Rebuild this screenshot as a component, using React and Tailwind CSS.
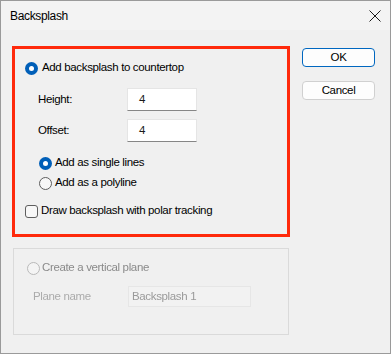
const Radio = ({ checked, disabled }) => (
  checked ? (
    <span className="w-[13px] h-[13px] rounded-full bg-[#005fb8] flex items-center justify-center shrink-0">
      <span className="w-[5px] h-[5px] rounded-full bg-white" />
    </span>
  ) : (
    <span className={`w-[13px] h-[13px] rounded-full border shrink-0 ${disabled ? 'border-[#b8b8b8] bg-[#f4f4f4]' : 'border-[#5e5e5e] bg-[#f7f7f7]'}`} />
  )
);

const Field = ({ value }) => (
  <div className="w-[70px] h-[23px] bg-white border border-[#e5e5e5] border-b-[#868686] flex items-center pl-[11px] text-[#1a1a1a]">
    {value}
  </div>
);

const App = () => {
  return (
    <div className="w-[391px] h-[354px] bg-[#f0f0f0] border border-[#9a9a9a] flex flex-col text-[11.5px] tracking-[-0.35px] text-black" style={{ fontFamily: '"Liberation Sans", Arial, sans-serif' }}>
      {/* title bar */}
      <div className="h-[29px] bg-[#f3f3f3] flex items-center justify-between pl-[9px] pr-[9px]">
        <span className="text-[12px]">Backsplash</span>
        <svg width="12" height="12" viewBox="0 0 12 12">
          <path d="M0.5 0.5 L11.5 11.5 M11.5 0.5 L0.5 11.5" stroke="#1a1a1a" strokeWidth="1" />
        </svg>
      </div>

      <div className="flex flex-1">
        {/* left column */}
        <div className="pl-[11px] pt-[16px] flex flex-col">
          <div className="w-[278px] h-[191px] border-[3px] border-[#ff2a0c] flex flex-col">
            <div className="h-[16px] mt-[11px] pl-[10px] flex items-center gap-[4px]">
              <Radio checked />
              <span>Add backsplash to countertop</span>
            </div>
            <div className="h-[23px] mt-[12px] pl-[23px] flex items-center">
              <span className="w-[89px]">Height:</span>
              <Field value="4" />
            </div>
            <div className="h-[23px] mt-[8px] pl-[23px] flex items-center">
              <span className="w-[89px]">Offset:</span>
              <Field value="4" />
            </div>
            <div className="h-[16px] mt-[13px] pl-[24px] flex items-center gap-[3px]">
              <Radio checked />
              <span>Add as single lines</span>
            </div>
            <div className="h-[16px] mt-[4px] pl-[24px] flex items-center gap-[3px]">
              <Radio />
              <span>Add as a polyline</span>
            </div>
            <div className="h-[16px] mt-[12px] pl-[10px] flex items-center gap-[3px]">
              <span className="w-[13px] h-[13px] rounded-[3px] border border-[#5e5e5e] bg-[#f7f7f7] shrink-0" />
              <span>Draw backsplash with polar tracking</span>
            </div>
          </div>

          {/* disabled group */}
          <div className="ml-[1px] mt-[11px] w-[276px] h-[87px] border border-[#dadada] blur-[0.7px] text-[#ababab] flex flex-col">
            <div className="h-[16px] mt-[11px] pl-[13px] flex items-center gap-[2px]">
              <Radio disabled />
              <span className="text-[#8a8a8a]">Create a vertical plane</span>
            </div>
            <div className="h-[21px] mt-[10px] pl-[19px] flex items-center">
              <span className="w-[95px]">Plane name</span>
              <div className="w-[123px] h-[21px] border border-[#e6e6e6] bg-[#f2f2f2] flex items-center pl-[3px] text-[#9a9a9a]">Backsplash 1</div>
            </div>
          </div>
        </div>

        {/* buttons */}
        <div className="pl-[12px] pt-[18px] flex flex-col gap-[14px]">
          <button className="w-[73px] h-[19px] rounded-[4px] border border-[#0067c0] bg-[#fdfdfd] flex items-center justify-center">OK</button>
          <button className="w-[73px] h-[19px] rounded-[4px] border border-[#d0d0d0] bg-[#fdfdfd] flex items-center justify-center">Cancel</button>
        </div>
      </div>
    </div>
  );
};

export default App;
